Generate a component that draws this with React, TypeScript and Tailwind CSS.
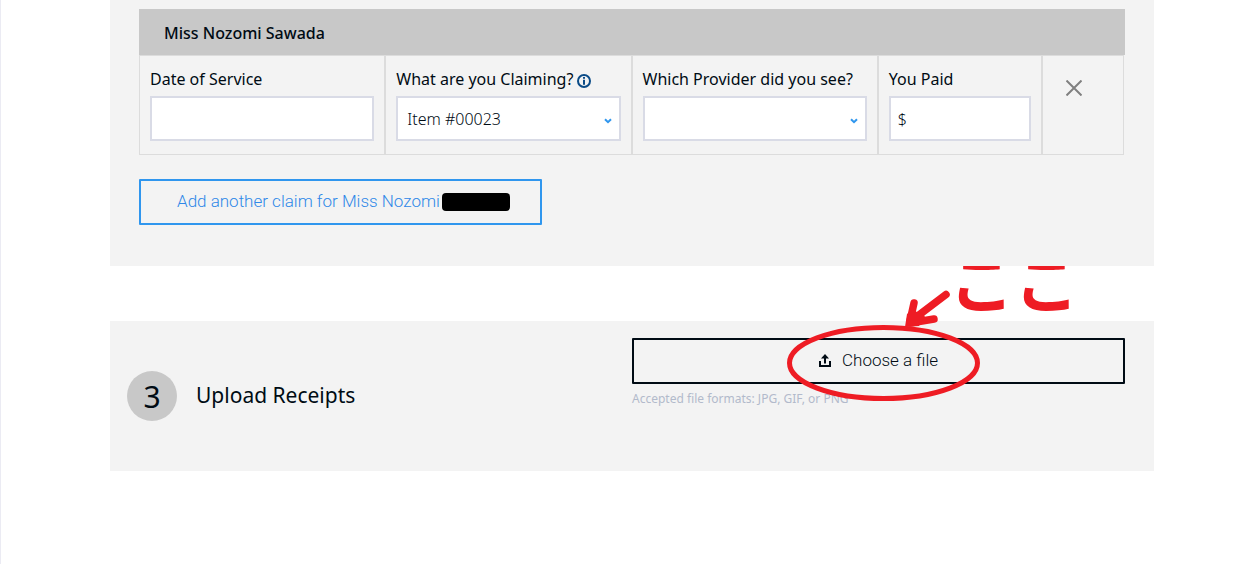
import type { ReactNode } from "react";

const field =
  "block h-[45px] w-full appearance-none rounded-none border-2 border-[#d9dbe6] bg-white text-base font-light text-[#000b14] outline-none";

function Cell({ children }: { children: ReactNode }) {
  return <div className="min-w-0 border border-[#dcdcdc] px-[10px] pt-[11px] pb-[13px]">{children}</div>;
}

function Label({ id, text, children }: { id: string; text: string; children?: ReactNode }) {
  return (
    <div className="mb-[5px] flex h-6 items-center gap-1 font-normal whitespace-nowrap">
      <label htmlFor={id}>{text}</label>
      {children}
    </div>
  );
}

function Select({ id, options }: { id: string; options: string[] }) {
  return (
    <div className="relative">
      <select id={id} className={`${field} px-[9px]`}>
        {options.map((option) => (
          <option key={option}>{option}</option>
        ))}
      </select>
      <svg viewBox="0 0 8 6" className="pointer-events-none absolute top-[22px] right-[9px] h-[6px] w-2" fill="none">
        <path d="M1 1.2 4 4.2 7 1.2" stroke="#2f96ee" strokeWidth="2" />
      </svg>
    </div>
  );
}

function InfoIcon() {
  return (
    <svg viewBox="0 0 14 14" className="mt-[3px] size-[14px] shrink-0" fill="none">
      <circle cx="7" cy="7" r="6" stroke="#0a4b87" strokeWidth="2" />
      <path d="M7 3v1.8M7 5.8v5" stroke="#0a4b87" strokeWidth="2" />
    </svg>
  );
}

function UploadIcon() {
  return (
    <svg viewBox="0 0 12 13" className="-mt-[2px] h-[13px] w-3" fill="none" stroke="#000b14" strokeWidth="2">
      <path d="M1 7v5h10V7" />
      <path d="M6 9.5V3" />
      <path d="M6 0 10 4.6H2Z" fill="#000b14" stroke="none" />
    </svg>
  );
}

function Annotation() {
  return (
    <svg
      viewBox="0 0 194 112"
      className="pointer-events-none absolute top-[-48px] left-1/2 h-[112px] w-[194px] -translate-x-[92px]"
      fill="none"
      stroke="#ee1c24"
      aria-hidden="true"
    >
      <ellipse cx="96.5" cy="73" rx="94" ry="35.5" strokeWidth="5" />
      <path d="M159 4.5 124 31" strokeWidth="7.5" strokeLinecap="round" />
      <path d="M127 13 123 31M147 29 123 33" strokeWidth="7.5" strokeLinecap="round" />
      <path d="M120 24 118 37 132 36 138 26 126 20Z" fill="#ee1c24" stroke="none" />
    </svg>
  );
}

export default function App() {
  return (
    <main className="min-h-screen border-l border-[#ebebf3] bg-white pr-[92px] pl-[109px] font-['Noto_Sans','Noto_Sans_CJK_JP',sans-serif] text-base font-light text-[#000b14]">
      <section className="bg-[#f3f3f3] px-[29px] pt-[9px] pb-[41px]">
        <h2 className="bg-[#c8c8c8] px-[25px] pt-3 pb-[10px] text-base leading-6 font-medium">Miss Nozomi Sawada</h2>
        <div className="mr-px grid grid-cols-[3fr_3fr_3fr_2fr_1fr]">
          <Cell>
            <Label id="date" text="Date of Service" />
            <input id="date" type="text" className={`${field} px-[9px]`} />
          </Cell>
          <Cell>
            <Label id="item" text="What are you Claiming?">
              <InfoIcon />
            </Label>
            <Select id="item" options={["Item #00023"]} />
          </Cell>
          <Cell>
            <Label id="provider" text="Which Provider did you see?" />
            <Select id="provider" options={[""]} />
          </Cell>
          <Cell>
            <Label id="paid" text="You Paid" />
            <input id="paid" type="text" defaultValue="$" className={`${field} px-[7px]`} />
          </Cell>
          <Cell>
            <button type="button" aria-label="Remove claim" className="mt-[13px] ml-[13px] block">
              <svg viewBox="0 0 16 16" className="size-4" fill="none" stroke="#808080" strokeWidth="2">
                <path d="M.5.5l15 15M15.5.5l-15 15" />
              </svg>
            </button>
          </Cell>
        </div>
        <button
          type="button"
          className="mt-6 flex h-[46px] items-center rounded-[1px] border-2 border-[#2f96ee] pr-[30px] pl-9 font-[Roboto,sans-serif] text-[17px] font-light whitespace-nowrap text-[#2f88e8]"
        >
          Add another claim for Miss Nozomi
          <span className="ml-[2px] h-[18px] w-[68px] rounded bg-black" />
        </button>
      </section>

      <div className="relative h-[55px] overflow-hidden">
        <p className="absolute top-[-15px] right-[75px] text-[65px] leading-[65px] font-bold text-[#ee1c24]">ここ</p>
      </div>

      <section className="grid min-h-[150px] grid-cols-2 bg-[#f3f3f3] pr-[29px] pl-[17px]">
        <div className="flex items-center gap-[19px]">
          <span className="flex size-[50px] items-center justify-center rounded-full bg-[#c8c8c8] text-[30px] font-normal">3</span>
          <h2 className="text-[21px] font-normal">Upload Receipts</h2>
        </div>
        <div className="ml-[6px] pt-[17px]">
          <div className="relative">
            <button
              type="button"
              className="flex h-[46px] w-full items-center justify-center gap-[11px] rounded-[1px] border-2 border-[#000b14] font-[Roboto,sans-serif] text-[17px] font-light"
            >
              <UploadIcon />
              Choose a file
            </button>
            <Annotation />
          </div>
          <p className="mt-[7px] text-xs leading-4 font-normal text-[#b2bacb]">Accepted file formats: JPG, GIF, or PNG</p>
        </div>
      </section>
    </main>
  );
}
